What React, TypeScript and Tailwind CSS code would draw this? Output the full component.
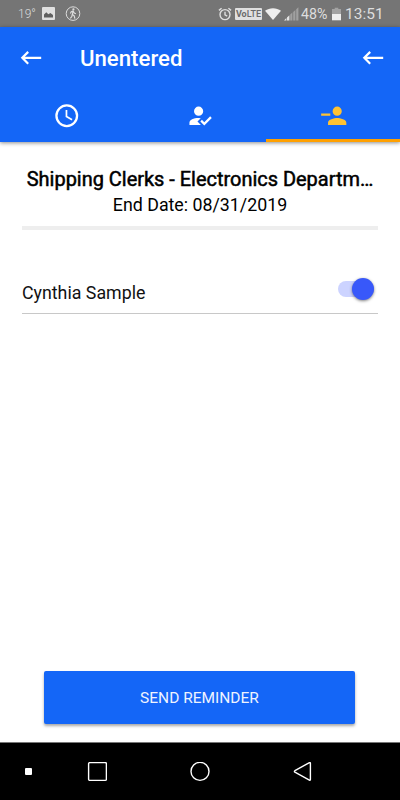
import { useState } from "react";

const TABS = [
  {
    id: "pending",
    label: "Pending",
    path: "M12 2a10 10 0 1 0 0 20 10 10 0 0 0 0-20zm0 18a8 8 0 1 1 0-16 8 8 0 0 1 0 16zm.5-13H11v6l5.25 3.15.75-1.23-4.5-2.67z",
  },
  {
    id: "entered",
    label: "Entered",
    path: "M21.1 12.5l1.4 1.41-6.53 6.59-3.47-3.5 1.4-1.41 2.07 2.08 5.13-5.17M10 17l3 3H3v-2c0-2.21 3.58-4 8-4l1.89.11L10 17m1-13a4 4 0 1 1 0 8 4 4 0 0 1 0-8z",
  },
  {
    id: "unentered",
    label: "Unentered",
    path: "M15 14c-2.67 0-8 1.33-8 4v2h16v-2c0-2.67-5.33-4-8-4M1 10v2h8v-2m6 2a4 4 0 1 0 0-8 4 4 0 0 0 0 8z",
  },
];

function BackArrow() {
  return (
    <svg
      width="22"
      height="16"
      viewBox="0 0 22 16"
      fill="none"
      stroke="currentColor"
      strokeWidth="2.2"
    >
      <path d="M8.2 1.9 2.3 7.8l5.9 5.9M2.3 7.8h18.9" />
    </svg>
  );
}

function StatusBar() {
  return (
    <div className="flex h-[27px] items-center bg-[#757575] pl-[18px] pr-[17px] text-[#dedede]">
      <span className="w-6 pt-px text-[12px] font-light">19°</span>
      <svg width="13" height="13" viewBox="0 0 13 13">
        <rect width="13" height="13" rx="1" fill="#e0e0e0" />
        <path d="M2 10.5V7.5l2.3-2.2 2 2L8.4 6 11 8v2.5z" fill="#606060" />
      </svg>
      <svg
        className="ml-[10px]"
        width="16"
        height="16"
        viewBox="0 0 16 16"
        fill="none"
        stroke="#dcdcdc"
        strokeWidth="1"
      >
        <circle cx="8" cy="7.6" r="6.8" />
        <circle cx="8.4" cy="3.4" r="1.1" fill="#dcdcdc" stroke="none" />
        <path
          d="M5.4 7.6 6.3 5.8l1.8-.8 1.2 2 1.6.7M8 5.2 7.4 8.5 9.2 9.8l.7 2.8M7.3 8.4l-.5 2.2-1.5 1.8"
          strokeWidth="1.2"
        />
      </svg>
      <div className="ml-auto flex items-center">
        <svg
          width="14"
          height="14"
          viewBox="0 0 14 14"
          fill="none"
          stroke="currentColor"
          strokeWidth="1.4"
        >
          <circle cx="7" cy="7.6" r="5" />
          <path d="M7 4.8v3l2.2 1.3M.9 3.4l2.7-2.2M13.1 3.4l-2.7-2.2" />
        </svg>
        <span className="ml-[3px] flex h-3 w-[27px] items-center justify-center rounded-[1px] bg-[#e0e0e0] pt-px text-[9px] leading-none text-[#6a6a6a]">
          <b>Vo</b>
          <span className="font-medium">LTE</span>
        </span>
        <svg className="ml-[3px]" width="16" height="12" viewBox="0 0 16 12">
          <path d="M0 2.8C4.4-.7 11.6-.7 16 2.8L8 12z" fill="#eee" />
        </svg>
        <svg className="ml-[3px]" width="15" height="14" viewBox="0 0 15 14">
          <path d="M0 13.5 2.4 11v2.5zM3 13.5v-3l2.4-2.2v5.2z" fill="#e4e4e4" />
          <path
            d="M6.2 13.5V7.6L8.4 5.5v8zM9.2 13.5V4.9l2.2-2v10.6zM12.2 13.5V2.2L14.4.2v13.3z"
            fill="#a0a0a0"
          />
        </svg>
        <span className="ml-[2px] w-7 whitespace-nowrap pt-[3px] text-[14.2px]">
          48%
        </span>
        <svg className="ml-[3px]" width="9" height="14" viewBox="0 0 10 14">
          <path d="M3 0h4v1.5h3V7H0V1.5h3z" fill="#a2a2a2" />
          <path d="M0 7h10v7H0z" fill="#eee" />
        </svg>
        <span className="ml-1 w-[38px] whitespace-nowrap pt-0.5 text-[15.5px]">
          13:51
        </span>
      </div>
    </div>
  );
}

function NavigationBar() {
  return (
    <nav className="flex h-[58px] items-center border-t border-[#777] bg-black text-white">
      <span className="ml-[25px] size-[7px] rounded-[1px] bg-white" />
      <svg
        className="ml-[55px]"
        width="20"
        height="20"
        viewBox="0 0 20 20"
        fill="none"
        stroke="currentColor"
        strokeWidth="1.4"
      >
        <rect x="1.6" y="0.6" width="17.8" height="17.8" rx="1.2" />
      </svg>
      <svg
        className="ml-[83px]"
        width="20"
        height="20"
        viewBox="0 0 20 20"
        fill="none"
        stroke="currentColor"
        strokeWidth="1.4"
      >
        <circle cx="10" cy="9.4" r="9" />
      </svg>
      <svg
        className="ml-[83px]"
        width="20"
        height="20"
        viewBox="0 0 20 20"
        fill="none"
        stroke="currentColor"
        strokeWidth="1.4"
        strokeLinejoin="round"
      >
        <path d="M17.4 1.3v16.2q0 1-1 .6L1.9 10.1q-1-.7 0-1.4L16.4.7q1-.4 1 .6z" />
      </svg>
    </nav>
  );
}

export default function App() {
  const [activeTab, setActiveTab] = useState("unentered");
  const [selected, setSelected] = useState(true);

  return (
    <div className="flex h-[800px] w-[400px] flex-col overflow-hidden bg-white font-['Roboto',sans-serif] text-[#111]">
      <StatusBar />

      <header className="h-[115px] bg-[#1466f7] text-white shadow-[0_1px_4px_rgba(0,0,0,0.45)]">
        <div className="flex h-[62px] items-center pl-5 pr-4">
          <button aria-label="Back">
            <BackArrow />
          </button>
          <h1 className="ml-[38px] pt-px text-[22.2px] font-medium">Unentered</h1>
          <button className="ml-auto" aria-label="Return">
            <BackArrow />
          </button>
        </div>

        <div className="grid h-[53px] grid-cols-[133px_133px_134px]">
          {TABS.map((tab) => (
            <button
              key={tab.id}
              aria-label={tab.label}
              onClick={() => setActiveTab(tab.id)}
              className={`flex justify-center border-b-[3px] pl-px pt-[13px] ${
                activeTab === tab.id
                  ? "border-[#ffa000] text-[#ffc233]"
                  : "border-transparent"
              }`}
            >
              <svg width="27.5" height="27.5" viewBox="0 0 24 24" fill="currentColor">
                <path d={tab.path} />
              </svg>
            </button>
          ))}
        </div>
      </header>

      <main className="flex flex-1 flex-col px-[22px]">
        <section className="flex h-[88px] flex-col items-center border-b-4 border-[#eee] pt-[25px] text-black">
          <h2 className="whitespace-nowrap text-[19.95px] leading-[25px] [-webkit-text-stroke:0.5px_black]">
            Shipping Clerks - Electronics Departm…
          </h2>
          <p className="text-[17.8px] leading-[25px]">End Date: 08/31/2019</p>
        </section>

        <div className="mt-10 flex h-11 items-center justify-between border-b border-[#c8c8c8] pr-1">
          <span className="pt-1 text-[17.8px]">Cynthia Sample</span>
          <button
            role="switch"
            aria-checked={selected}
            onClick={() => setSelected(!selected)}
            className={`mb-[5px] flex h-4 w-9 items-center rounded-full ${
              selected ? "justify-end bg-[#ccd3ff]" : "bg-[#ccc]"
            }`}
          >
            <span className="size-[22px] shrink-0 rounded-full bg-[#3858fa] shadow-[0_1px_3px_rgba(0,0,0,0.5)]" />
          </button>
        </div>

        <button className="mb-[18px] ml-[22px] mr-[23px] mt-auto h-[53px] rounded-[2px] bg-[#1466f7] pt-[3px] text-[15.5px] text-[#eef3ff] shadow-[0_2px_3px_rgba(0,0,0,0.35)]">
          SEND REMINDER
        </button>
      </main>

      <NavigationBar />
    </div>
  );
}
